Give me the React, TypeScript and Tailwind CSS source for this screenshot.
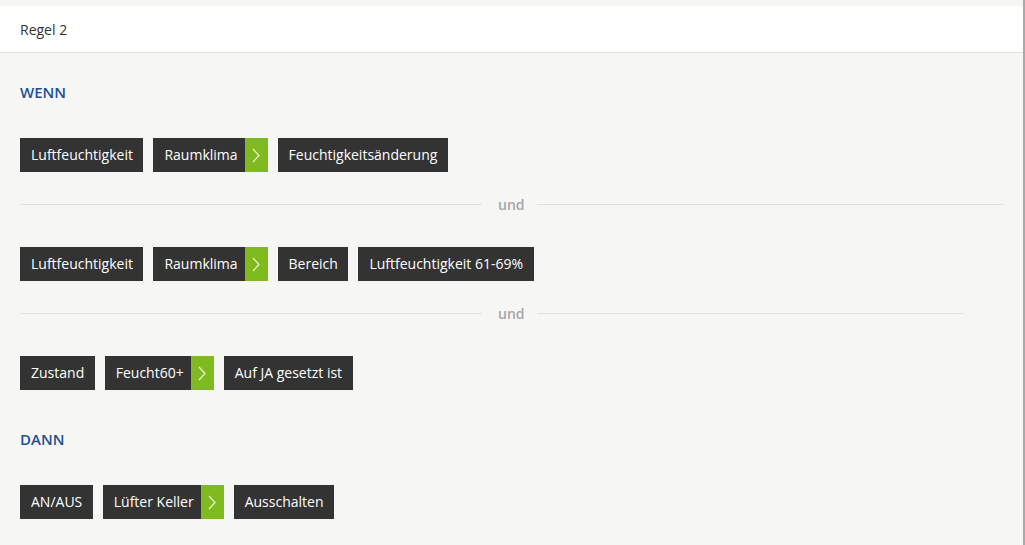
import React from "react";

const font = { fontFamily: '"Open Sans", "Noto Sans", sans-serif' };

function Chip({ label, arrow }: { label: string; arrow?: boolean }) {
  return (
    <div className="flex h-[34px] items-stretch bg-[#333333] text-white">
      <span
        className={`flex items-center pl-[11px] text-[14px] leading-none ${arrow ? "pr-[7px]" : "pr-[10.5px]"}`}
      >
        {label}
      </span>
      {arrow && (
        <span className="flex w-[23px] items-center justify-center bg-[#7fba1f]">
          <svg width="8" height="15" viewBox="0 0 8 15" fill="none">
            <path d="M1 1 L7 7.5 L1 14" stroke="#e8f3d4" strokeWidth="1.2" />
          </svg>
        </span>
      )}
    </div>
  );
}

function Row({ items }: { items: { label: string; arrow?: boolean }[] }) {
  return (
    <div className="flex gap-[10px]">
      {items.map((it, i) => (
        <Chip key={i} label={it.label} arrow={it.arrow} />
      ))}
    </div>
  );
}

function Und({ extraRight }: { extraRight?: boolean }) {
  return (
    <div className={`flex h-[20px] items-center ${extraRight ? "mr-[40px]" : ""}`}>
      <div className="h-px w-[462px] bg-[#e2e2e0]" />
      <span className="pl-[16px] pr-[12px] text-[14px] font-semibold text-[#a6a6a6]">und</span>
      <div className="h-px flex-1 bg-[#e2e2e0]" />
    </div>
  );
}

export default function App() {
  return (
    <div className="h-[545px] w-[1025px] overflow-hidden border-r-2 border-[#a9a9a9] bg-[#f6f6f4]" style={font}>
      <div className="mt-[6px] flex h-[47px] items-center border-b border-[#e0e0de] bg-white px-[20px] text-[14px] text-[#333333]">
        Regel 2
      </div>
      <div className="px-[20px] pr-[19px]">
        <div className="mt-[29px] text-[15px] font-semibold leading-[20px] text-[#1f4f95]">WENN</div>
        <div className="mt-[36px]">
          <Row
            items={[
              { label: "Luftfeuchtigkeit" },
              { label: "Raumklima", arrow: true },
              { label: "Feuchtigkeitsänderung" },
            ]}
          />
        </div>
        <div className="mt-[22px]">
          <Und />
        </div>
        <div className="mt-[33px]">
          <Row
            items={[
              { label: "Luftfeuchtigkeit" },
              { label: "Raumklima", arrow: true },
              { label: "Bereich" },
              { label: "Luftfeuchtigkeit 61-69%" },
            ]}
          />
        </div>
        <div className="mt-[22px]">
          <Und extraRight />
        </div>
        <div className="mt-[33px]">
          <Row
            items={[
              { label: "Zustand" },
              { label: "Feucht60+", arrow: true },
              { label: "Auf JA gesetzt ist" },
            ]}
          />
        </div>
        <div className="mt-[39px] text-[15px] font-semibold leading-[20px] text-[#1f4f95]">DANN</div>
        <div className="mt-[36px]">
          <Row
            items={[
              { label: "AN/AUS" },
              { label: "Lüfter Keller", arrow: true },
              { label: "Ausschalten" },
            ]}
          />
        </div>
      </div>
    </div>
  );
}
